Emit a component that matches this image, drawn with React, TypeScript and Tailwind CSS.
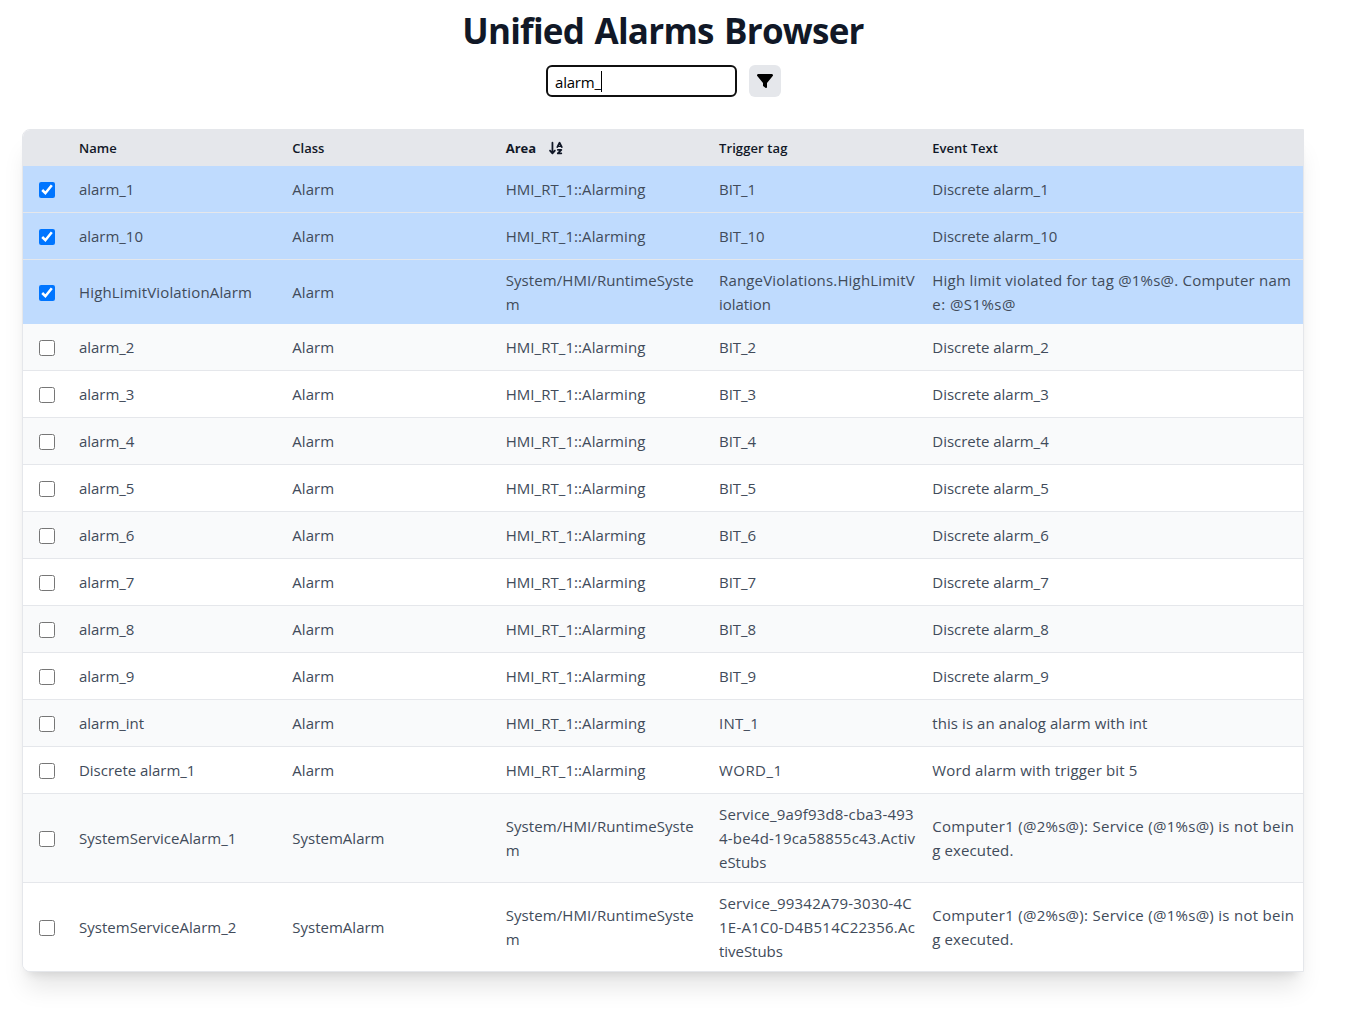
import { FaFilter, FaArrowDownAZ } from 'react-icons/fa6';

type Row = {
  name: string;
  cls: string;
  area: string[];
  tag: string[];
  text: string[];
  checked?: boolean;
  height?: string;
};

const HMI = ['HMI_RT_1::Alarming'];
const SYSTEM = ['System/HMI/RuntimeSyste', 'm'];
const SERVICE_TEXT = ['Computer1 (@2%s@): Service (@1%s@) is not bein', 'g executed.'];

const rows: Row[] = [
  { name: 'alarm_1', cls: 'Alarm', area: HMI, tag: ['BIT_1'], text: ['Discrete alarm_1'], checked: true },
  { name: 'alarm_10', cls: 'Alarm', area: HMI, tag: ['BIT_10'], text: ['Discrete alarm_10'], checked: true },
  {
    name: 'HighLimitViolationAlarm',
    cls: 'Alarm',
    area: SYSTEM,
    tag: ['RangeViolations.HighLimitV', 'iolation'],
    text: ['High limit violated for tag @1%s@. Computer nam', 'e: @S1%s@'],
    checked: true,
    height: 'h-16 border-b-0',
  },
  ...[2, 3, 4, 5, 6, 7, 8, 9].map((n) => ({
    name: `alarm_${n}`,
    cls: 'Alarm',
    area: HMI,
    tag: [`BIT_${n}`],
    text: [`Discrete alarm_${n}`],
  })),
  { name: 'alarm_int', cls: 'Alarm', area: HMI, tag: ['INT_1'], text: ['this is an analog alarm with int'] },
  { name: 'Discrete alarm_1', cls: 'Alarm', area: HMI, tag: ['WORD_1'], text: ['Word alarm with trigger bit 5'] },
  {
    name: 'SystemServiceAlarm_1',
    cls: 'SystemAlarm',
    area: SYSTEM,
    tag: ['Service_9a9f93d8-cba3-493', '4-be4d-19ca58855c43.Activ', 'eStubs'],
    text: SERVICE_TEXT,
    height: 'h-[89px] border-b',
  },
  {
    name: 'SystemServiceAlarm_2',
    cls: 'SystemAlarm',
    area: SYSTEM,
    tag: ['Service_99342A79-3030-4C', '1E-A1C0-D4B514C22356.Ac', 'tiveStubs'],
    text: SERVICE_TEXT,
    height: 'h-[88px]',
  },
];

// Letter spacing for strings that need slightly looser or tighter setting.
const TRACKING: Record<string, string> = {
  Alarm: 'tracking-[0.05px]',
  SystemAlarm: 'tracking-normal',
  SystemServiceAlarm_1: 'tracking-[0.02px]',
  SystemServiceAlarm_2: 'tracking-[0.02px]',
  'HMI_RT_1::Alarming': 'tracking-[0.06px]',
  'System/HMI/RuntimeSyste': 'tracking-[0.09px]',
  HighLimitViolationAlarm: 'tracking-[0.15px]',
  'RangeViolations.HighLimitV': 'tracking-[0.17px]',
  'High limit violated for tag @1%s@. Computer nam': 'tracking-[0.22px]',
  'e: @S1%s@': 'tracking-[0.44px]',
  'this is an analog alarm with int': 'tracking-[0.07px]',
  'Word alarm with trigger bit 5': 'tracking-[0.14px]',
  WORD_1: 'tracking-[0.45px]',
  INT_1: 'tracking-[0.25px]',
  'Computer1 (@2%s@): Service (@1%s@) is not bein': 'tracking-[0.28px]',
  'g executed.': 'tracking-[0.1px]',
  'Service_9a9f93d8-cba3-493': 'tracking-[0.18px]',
  '4-be4d-19ca58855c43.Activ': 'tracking-[0.22px]',
  'Service_99342A79-3030-4C': 'tracking-[0.22px]',
  '1E-A1C0-D4B514C22356.Ac': 'tracking-[0.25px]',
};

const COLUMNS = 'grid grid-cols-[48px_213.33px_213.33px_213.33px_213.33px_1fr] items-center';

function Cell({ lines }: { lines: string[] }) {
  return (
    <div className="px-2">
      {lines.map((line) => (
        <div key={line} className={`whitespace-nowrap ${TRACKING[line] ?? 'tracking-[-0.03px]'}`}>
          {line}
        </div>
      ))}
    </div>
  );
}

function Checkbox({ checked }: { checked?: boolean }) {
  return (
    <div className="flex pt-px pl-4">
      <input type="checkbox" defaultChecked={checked} className="size-4" />
    </div>
  );
}

export default function App() {
  return (
    <div className="h-[1014px] w-[1345px] overflow-hidden bg-white font-['Open_Sans',sans-serif]">
      <h1 className="flex h-[65px] w-[1326px] justify-center pt-[7px] text-[35px] leading-[48px] font-bold text-[#111827]">
        <span className="tracking-[-0.75px] [word-spacing:2px] whitespace-nowrap">Unified Alarms Browser</span>
      </h1>
      <div className="flex w-[1327px] justify-center gap-3">
        <div className="flex h-8 w-[191px] items-center rounded-md border-2 border-[#101010] pl-[7px] text-[15px] text-black">
          <span className="pt-0.5 tracking-[-0.2px]">alarm_</span>
          <span className="h-[21px] w-px bg-black" />
        </div>
        <button className="flex size-8 items-center justify-center rounded-md bg-[#e5e7eb] text-black">
          <FaFilter className="size-4" />
        </button>
      </div>
      <div className="mt-8 ml-[22px] w-[1282px] overflow-hidden rounded-l-lg border border-[#e5e7eb] bg-white shadow-xl">
        <div className={`${COLUMNS} h-9 bg-[#e5e7eb] pt-0.5 text-[13px] font-semibold text-[#111827]`}>
          <div />
          <div className="px-2">Name</div>
          <div className="px-2">Class</div>
          <div className="flex items-center gap-3 px-2 font-bold">
            Area
            <FaArrowDownAZ className="mb-0.5 size-4" />
          </div>
          <div className="px-2 tracking-[0.1px]">Trigger tag</div>
          <div className="px-2">Event Text</div>
        </div>
        {rows.map((row, i) => (
          <div
            key={row.name}
            className={`${COLUMNS} border-[#e5e7eb] text-[15px] leading-6 text-[#414b5a] ${row.height ?? 'h-[47px] border-b'} ${
              row.checked ? 'bg-[#bfdbfe]' : i % 2 ? 'bg-[#f9fafb]' : 'bg-white'
            }`}
          >
            <Checkbox checked={row.checked} />
            <Cell lines={[row.name]} />
            <Cell lines={[row.cls]} />
            <Cell lines={row.area} />
            <Cell lines={row.tag} />
            <Cell lines={row.text} />
          </div>
        ))}
      </div>
    </div>
  );
}
